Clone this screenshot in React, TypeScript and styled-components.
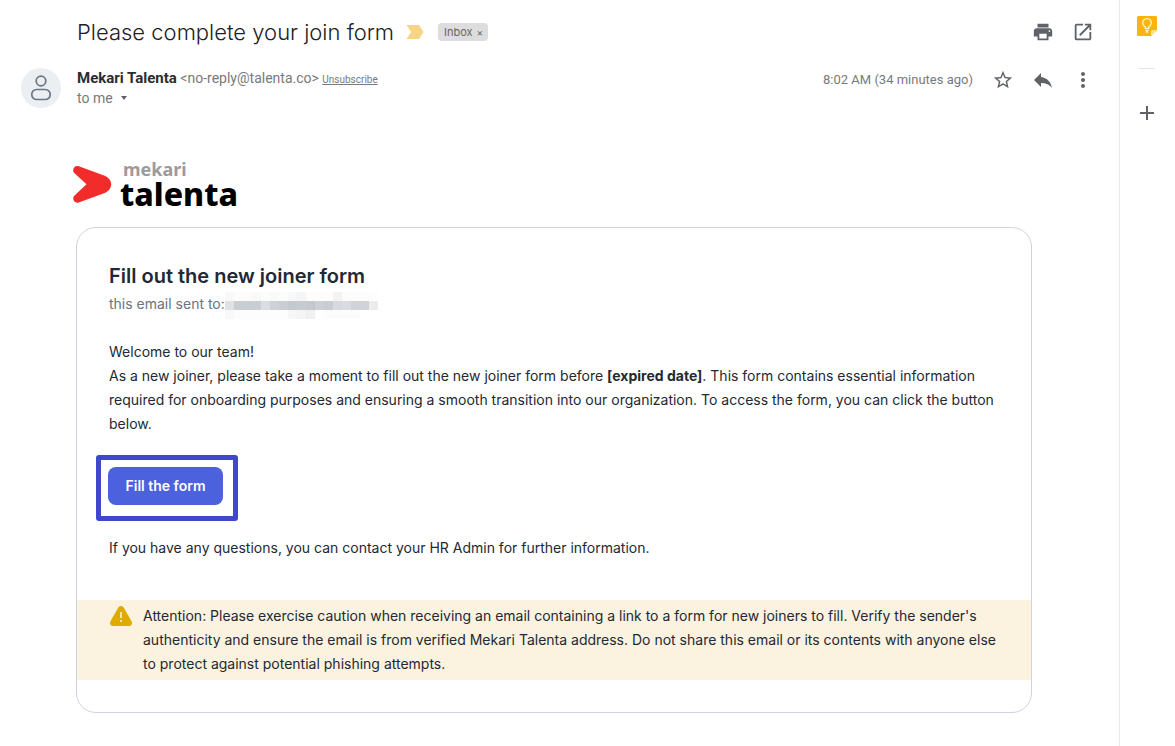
import React from "react";
import styled, { createGlobalStyle } from "styled-components";
import { MdAdd, MdMoreVert, MdOpenInNew, MdPrint, MdReply, MdStarBorder } from "react-icons/md";

const GlobalStyle = createGlobalStyle`
  *, *::before, *::after { box-sizing: border-box; }
  body {
    margin: 0;
    background: #fff;
    font-family: Inter, "Liberation Sans", sans-serif;
    color: #232933;
  }
  button { font: inherit; color: inherit; border: 0; padding: 0; background: none; cursor: pointer; }
  h1, h2, p { margin: 0; }
`;

const Page = styled.div`
  display: flex;
  min-height: 100vh;
`;

const Main = styled.main`
  flex: 1;
  min-width: 0;
  padding: 16px 24px 32px 20px;
`;

const SubjectRow = styled.header`
  display: flex;
  align-items: center;
  height: 32px;
  padding-left: 57px;
`;

const Subject = styled.h1`
  font-size: 22px;
  line-height: 32px;
  font-weight: 350;
  color: #202124;
`;

const Importance = styled.svg`
  margin-left: 12px;
`;

const Label = styled.span`
  display: flex;
  align-items: center;
  gap: 4px;
  height: 18px;
  margin-left: 14px;
  padding: 0 5px 0 6px;
  border-radius: 4px;
  background: #ddd;
  color: #666;
  font-size: 11px;
  line-height: 18px;

  button { font-size: 10px; line-height: 18px; }
`;

const Actions = styled.div`
  display: flex;
  gap: 16px;
  margin-left: auto;
`;

const IconButton = styled.button`
  display: flex;
  align-items: center;
  justify-content: center;
  width: 24px;
  height: 24px;
  color: #5f6368;
`;

const SenderRow = styled.section`
  display: flex;
  gap: 16px;
  margin-top: 20px;
  font-family: Roboto, "Liberation Sans", sans-serif;
  font-size: 14px;
  line-height: 20px;
  color: #777a7e;
`;

const Avatar = styled.div`
  display: flex;
  align-items: center;
  justify-content: center;
  width: 41px;
  height: 40px;
`;

const SenderName = styled.strong`
  font-size: 15px;
  line-height: 16px;
  font-weight: 700;
  color: #2c2d30;
`;

const Unsubscribe = styled.a`
  font-size: 10px;
  line-height: 10px;
  color: #777a7e;
`;

const Recipient = styled.button`
  display: flex;
  align-items: center;
  gap: 8px;
  color: #777a7e;
`;

const Caret = styled.span`
  border: 3px solid transparent;
  border-top: 4px solid #5f6368;
  border-bottom: 0;
`;

const Meta = styled.div`
  display: flex;
  align-items: center;
  height: 24px;
  margin-left: auto;
`;

const Sent = styled.time`
  margin-right: 18px;
  font-size: 13px;
`;

const Message = styled.article`
  padding: 0 63px 0 56px;
`;

const Brand = styled.div`
  display: flex;
  gap: 8px;
  height: 48px;
  margin: 51px 0 20px -4px;
  font-family: "Noto Sans", "Open Sans", sans-serif;
`;

const BrandMark = styled.svg`
  margin-top: 7px;
`;

const BrandText = styled.div`
  display: flex;
  flex-direction: column;
`;

const Company = styled.span`
  padding-left: 3px;
  font-size: 18px;
  line-height: 20px;
  font-weight: 700;
  color: #9b9b9b;
`;

const Product = styled.span`
  font-size: 32px;
  line-height: 30px;
  font-weight: 800;
  color: #000;
`;

const Card = styled.div`
  padding: 32px 0;
  border: 1px solid #d0d3de;
  border-radius: 20px;
  font-size: 14px;
  line-height: 24px;
`;

const CardBody = styled.div`
  padding: 0 32px;
`;

const Title = styled.h2`
  font-size: 20px;
  line-height: 32px;
  font-weight: 600;
`;

const SentTo = styled.div`
  display: flex;
  height: 27px;
  margin-bottom: 21px;
  color: #6b7280;
`;

const Mosaic = styled.div`
  display: grid;
  grid-template-columns: repeat(17, 9px);
  grid-auto-rows: 9px;
`;

const Cell = styled.span<{ $tone: string }>`
  background: ${(p) => p.$tone};
`;

const Highlight = styled.div`
  width: fit-content;
  margin: 19px 0 15px -13px;
  padding: 7px 10px 11px 7px;
  border: 5px solid #3f48cc;
  border-radius: 3px;
`;

const FormButton = styled.button`
  display: block;
  min-width: 115px;
  height: 38px;
  padding: 0 16px;
  border-radius: 8px;
  background: #4b61dd;
  color: #fff;
  font-size: 14px;
  font-weight: 600;
`;

const Notice = styled.div`
  display: flex;
  gap: 10px;
  margin-top: 40px;
  padding: 4px 32px;
  background: #fbf2df;
`;

const WarningIcon = styled.svg`
  flex-shrink: 0;
`;

const SidePanel = styled.aside`
  display: flex;
  flex-direction: column;
  align-items: center;
  width: 56px;
  padding: 14px 1px 0 0;
  border-left: 1px solid #e8eaed;
`;

const Divider = styled.hr`
  width: 16px;
  margin: 30px 0 32px;
  border: 0;
  border-top: 1px solid #e3e5e8;
`;

const mosaicTones = [
  "#f8f8f9", "#fcfcfc", "#fcfcfc", "#f8f9f9", "#fcfcfc", "#f8f9f9", "#fcfcfc", "#f7f8f9", "#f4f6f6",
  "#fcfcfc", "#fcfcfc", "#fcfcfc", "#f3f3f4", "#fcfcfc", "#fcfcfc", "#fcfcfc", "#fdfdfd",
  "#e0e1e3", "#cacdd2", "#cacdd2", "#cacdd2", "#dcdde1", "#cfd1d5", "#cacdd1", "#c5c8cc", "#c8cbce",
  "#c5c8cc", "#cdcfd4", "#c9ccd0", "#d8d9dd", "#dadbdf", "#d1d3d6", "#d1d3d6", "#ececef",
  "#f8f8f8", "#fdfdfd", "#fdfdfd", "#fdfdfd", "#fdfdfd", "#fdfdfd", "#fdfdfd", "#f7f7f7", "#f5f5f5",
  "#f0f0f0", "#fefefe", "#fcfcfc", "#fcfcfc", "#fcfcfc", "#fcfcfc", "#ffffff", "#ffffff",
];

export default function App() {
  return (
    <>
      <GlobalStyle />
      <Page>
        <Main>
          <SubjectRow>
            <Subject>Please complete your join form</Subject>
            <Importance width="18" height="14" viewBox="0 0 18 14" role="img" aria-label="Important">
              <path d="M.5 0H13l4.500 7L13 14H.5L5 7z" fill="#f7d584" />
            </Importance>
            <Label>
              Inbox
              <button aria-label="Remove label Inbox">×</button>
            </Label>
            <Actions>
              <IconButton aria-label="Print"><MdPrint size={22} /></IconButton>
              <IconButton aria-label="Open in new window"><MdOpenInNew size={22} /></IconButton>
            </Actions>
          </SubjectRow>

          <SenderRow>
            <Avatar>
              <svg width="40" height="40" viewBox="0 0 40 40" aria-hidden="true">
                <circle cx="20" cy="20" r="20" fill="#ebeff2" />
                <g fill="none" stroke="#6b7688" strokeWidth="1.700">
                  <circle cx="20" cy="13" r="4.800" />
                  <rect x="10.750" y="21.500" width="18.500" height="10" rx="5" />
                </g>
              </svg>
            </Avatar>
            <div>
              <div>
                <SenderName>Mekari Talenta</SenderName> &lt;no-reply@talenta.co&gt;{" "}
                <Unsubscribe href="#unsubscribe">Unsubscribe</Unsubscribe>
              </div>
              <Recipient>to me <Caret /></Recipient>
            </div>
            <Meta>
              <Sent>8:02 AM (34 minutes ago)</Sent>
              <Actions>
                <IconButton aria-label="Star"><MdStarBorder size={22} /></IconButton>
                <IconButton aria-label="Reply"><MdReply size={24} /></IconButton>
                <IconButton aria-label="More"><MdMoreVert size={24} /></IconButton>
              </Actions>
            </Meta>
          </SenderRow>

          <Message>
            <Brand>
              <BrandMark width="40" height="38" viewBox="0 0 40 38" aria-hidden="true">
                <path
                  d="M6.800.3 32 9.600C37 11.500 39.200 15 39.200 18.300S37 25.500 32 27.300L6.800 36.500C2.300 38-.8 32.500 2.800 29.300L14.500 18.300 2.800 7.500C-.8 4.300 2.300-1.300 6.800.3z"
                  fill="#f22b2b"
                />
              </BrandMark>
              <BrandText>
                <Company>mekari</Company>
                <Product>talenta</Product>
              </BrandText>
            </Brand>

            <Card>
              <CardBody>
                <Title>Fill out the new joiner form</Title>
                <SentTo>
                  this email sent to:
                  <Mosaic aria-hidden="true">
                    {mosaicTones.map((tone, i) => <Cell key={i} $tone={tone} />)}
                  </Mosaic>
                </SentTo>
                <p>Welcome to our team!</p>
                <p>
                  As a new joiner, please take a moment to fill out the new joiner form before{" "}
                  <b>[expired date]</b>. This form contains essential information required for
                  onboarding purposes and ensuring a smooth transition into our organization. To
                  access the form, you can click the button below.
                </p>
                <Highlight>
                  <FormButton>Fill the form</FormButton>
                </Highlight>
                <p>If you have any questions, you can contact your HR Admin for further information.</p>
              </CardBody>
              <Notice>
                <WarningIcon width="24" height="24" viewBox="0 0 24 24" aria-hidden="true">
                  <path
                    d="M9.300 3.500C10.500 1.400 13.500 1.400 14.700 3.500L22.400 17C23.800 19.500 22.600 22 20 22H4C1.400 22 .2 19.500 1.600 17z"
                    fill="#e0ab00"
                  />
                  <path d="M12 8v6M12 16v2" stroke="#fbf2df" strokeWidth="1.500" />
                </WarningIcon>
                <p>
                  Attention: Please exercise caution when receiving an email containing a link to a
                  form for new joiners to fill. Verify the sender's authenticity and ensure the email
                  is from verified Mekari Talenta address. Do not share this email or its contents
                  with anyone else to protect against potential phishing attempts.
                </p>
              </Notice>
            </Card>
          </Message>
        </Main>

        <SidePanel>
          <IconButton aria-label="Keep">
            <svg width="20" height="20" viewBox="0 0 20 20">
              <path d="M1.500 0h17A1.500 1.500 0 0 1 20 1.500V14l-6 6H1.500A1.500 1.500 0 0 1 0 18.500v-17A1.500 1.500 0 0 1 1.500 0z" fill="#f9b50b" />
              <path d="M14 20v-4.500a1.500 1.500 0 0 1 1.500-1.500H20z" fill="#fde19b" />
              <path
                d="M8.300 12.300v-1.500A4.300 4.300 0 1 1 11.700 10.800v1.500zM8.300 14.300h3.400M8.800 16h2.400"
                fill="none"
                stroke="#fff3d0"
                strokeWidth="1.300"
              />
            </svg>
          </IconButton>
          <Divider />
          <IconButton aria-label="Get add-ons"><MdAdd size={24} /></IconButton>
        </SidePanel>
      </Page>
    </>
  );
}
